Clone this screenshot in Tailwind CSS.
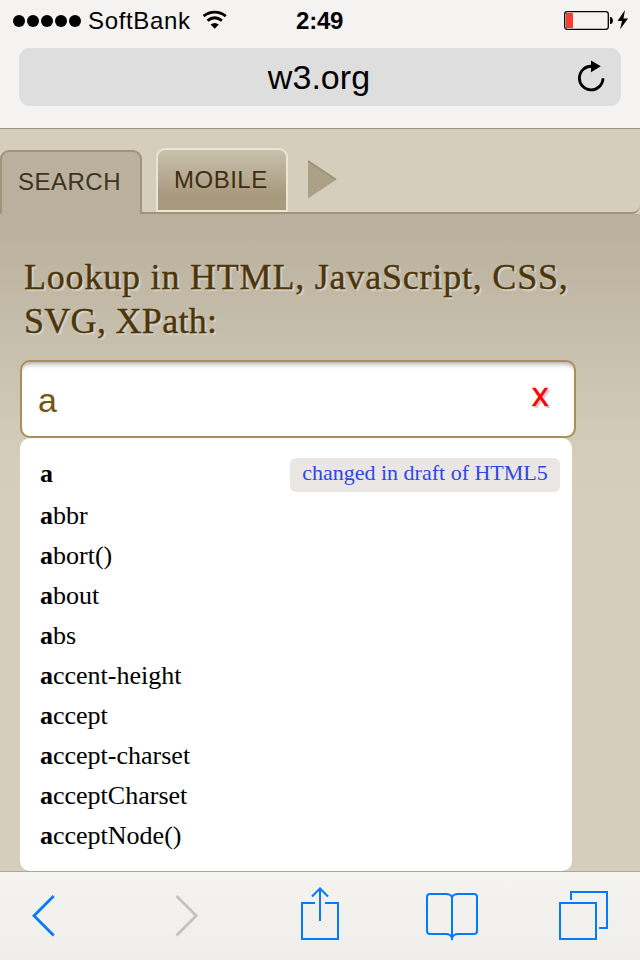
<!DOCTYPE html>
<html lang="en">
<head>
<meta charset="utf-8">
<title>w3.org</title>
<script src="https://cdn.jsdelivr.net/npm/@tailwindcss/browser@4"></script>
</head>
<body class="w-[640px] h-[960px] overflow-hidden flex flex-col bg-[#d5cebd] font-['Liberation_Sans',sans-serif] text-black">
<header class="h-[129px] shrink-0 bg-[#f4f3f1] border-b border-[#9a937f]">
  <div class="h-12 flex items-start">
    <div class="flex gap-[2px] pl-[13px] pt-[15px]">
      <i class="size-3 rounded-full bg-black"></i><i class="size-3 rounded-full bg-black"></i><i class="size-3 rounded-full bg-black"></i><i class="size-3 rounded-full bg-black"></i><i class="size-3 rounded-full bg-black"></i>
    </div>
    <span class="ml-[7px] mt-[5px] w-[114px] text-[24px] leading-8 tracking-[0.65px]">SoftBank</span>
    <svg class="mt-2.5 shrink-0" width="26" height="20" viewBox="0 0 26 20" fill="none" stroke="#000" stroke-width="2.8"><path d="M1.600 6.200C8.200 .8 17.200 .8 23.800 6.200M5.500 10.700C10 7 15.400 7 19.900 10.700"/><path d="M8.600 14.600Q12.700 11.400 16.800 14.600L12.700 18.800Z" fill="#000" stroke="none"/></svg>
    <span class="ml-[68px] mt-[5px] w-[268px] text-[24px] leading-8 font-bold tracking-[-0.2px]">2:49</span>
    <svg class="mt-[9px] shrink-0" width="66" height="22" viewBox="0 0 66 22"><rect x=".7" y="2.7" width="43.6" height="17.6" rx="2.5" fill="none" stroke="#000" stroke-width="1.3"/><rect x="2" y="4" width="7" height="15" fill="#ff3b30"/><path d="M46 8h1q2 1 2 3.500t-2 3.500h-1z"/><path d="M61 1L53.500 12H58L56 20.500L64 9.500H59.500Z"/></svg>
  </div>
  <div class="mx-[19px] h-[58px] rounded-[11px] bg-[#dedede] grid grid-cols-[1fr_auto_1fr] items-center">
    <span></span>
    <span class="text-[34px] leading-[58px] tracking-[0.05px] pr-0.5">w3.org</span>
    <svg class="justify-self-end mr-[14px]" width="32" height="34" viewBox="0 0 32 34"><path d="M17 6.300A11.800 11.800 0 1 0 28 18.300" fill="none" stroke="#000" stroke-width="2.8"/><path d="M16 .5L25.800 6.300L16 12.200Z"/></svg>
  </div>
</header>
<main class="h-[742px] shrink-0">
  <nav class="h-[85px] flex items-start">
    <div class="h-[85px] w-[142px] pt-[21px]"><div class="relative z-10 h-16 w-[142px] rounded-t-[9px] border-2 border-b-0 border-[#a2937a] bg-[#b9b19d] pl-4 text-[24px] leading-[60px] tracking-[0.5px] text-[#3c3322]">SEARCH</div></div>
    <div class="h-[85px] flex-1 flex items-start border-b-2 border-[#a2937a] rounded-br-lg pl-3.5 pt-[19px]">
      <div class="h-16 w-[132px] rounded-t-[9px] border-2 border-[#ece4d5] bg-linear-to-b from-[#c9c1ae] to-[#a89a7f] to-75% pl-4 text-[24px] leading-[60px] tracking-[0.5px] text-[#402e10]">MOBILE</div>
      <svg class="ml-5 mt-3" width="30" height="40" viewBox="0 0 30 40"><path d="M0 0L28.500 19.500L0 38.500Z" fill="#aca087"/><path d="M0 1L28 19.500" stroke="#9f937c" stroke-width="1.500"/></svg>
    </div>
  </nav>
  <section class="h-[657px] bg-[linear-gradient(#b9b19d_0px,#b9b19d_10px,#d3ccbb_235px,#d5cebd_288px)] pt-10 pl-5">
    <h1 class="h-[106px] pl-1 pt-px whitespace-nowrap font-['Liberation_Serif',serif] text-[36px] leading-[44px] text-[#4d3507] [text-shadow:2px_2px_1px_#d7d3cd] [-webkit-text-stroke:0.35px_#4d3507]"><span class="tracking-[0.8px]">Lookup in HTML, JavaScript, CSS,</span><br><span class="tracking-[0.3px]">SVG, XPath:</span></h1>
    <div class="h-[78px] w-[556px] flex justify-between rounded-[10px] border-2 border-[#a98e55] bg-white shadow-[inset_0_6px_5px_-4px_#aaa] pl-4 pr-[25px]">
      <span class="text-[34px] leading-[77px] text-[#735711]">a</span>
      <span class="text-[33px] leading-[64px] text-[#f00] [text-shadow:2px_2px_1px_#ccc] font-['Noto_Sans',sans-serif] [-webkit-text-stroke:0.4px_#f00]">x</span>
    </div>
    <ul class="h-[433px] w-[552px] rounded-[10px] bg-white pt-[15px] pl-5 pr-3 font-['Liberation_Serif',serif] text-[26px] leading-10">
      <li class="h-[43px] flex justify-between leading-[42px]"><b>a</b><span class="mt-[5px] h-[34px] w-[270px] rounded-md bg-[#eae6e3] text-center text-[22px] leading-[30px] text-[#2d49e5]">changed in draft of HTML5</span></li>
      <li><b>a</b>bbr</li><li><b>a</b>bort()</li><li><b>a</b>bout</li><li><b>a</b>bs</li><li><b>a</b>ccent-height</li><li><b>a</b>ccept</li><li><b>a</b>ccept-charset</li><li><b>a</b>cceptCharset</li><li><b>a</b>cceptNode()</li>
    </ul>
  </section>
</main>
<footer class="h-[89px] shrink-0 flex items-start bg-linear-to-b from-[#f4f3f0] to-[#f0eeea] border-t border-[#a9a69e] pt-3">
  <svg class="ml-[31px] mt-[10px]" width="26" height="44" viewBox="0 0 26 44" fill="none" stroke="#007aff" stroke-width="2.8"><path d="M22.700 2L3 21.700L22.700 41.500"/></svg>
  <svg class="ml-[117px] mt-[10px]" width="26" height="44" viewBox="0 0 26 44" fill="none" stroke="#c3c2be" stroke-width="2.8"><path d="M2.500 2L22.200 21.700L2.500 41.500"/></svg>
  <svg class="ml-[100px]" width="40" height="58" viewBox="0 0 40 58" fill="none" stroke="#007aff" stroke-width="2"><path d="M15 19H2V55H38V19H25M20 37V6M12 12.500L20 4.500L28 12.500"/></svg>
  <svg class="ml-[85px]" width="54" height="58" viewBox="0 0 54 58" fill="none" stroke="#007aff" stroke-width="2"><path d="M27 12V56M27 13Q25.500 10 21 10H5Q2 10 2 13V47Q2 50 5 50H21Q25.500 50 27 54Q28.500 50 33 50H49Q52 50 52 47V13Q52 10 49 10H33Q28.500 10 27 13"/></svg>
  <svg class="ml-[79px]" width="52" height="58" viewBox="0 0 52 58" fill="none" stroke="#007aff" stroke-width="2"><path d="M2 19H38V55H2ZM13 16V8H49V44H41"/></svg>
</footer>
</body>
</html>
